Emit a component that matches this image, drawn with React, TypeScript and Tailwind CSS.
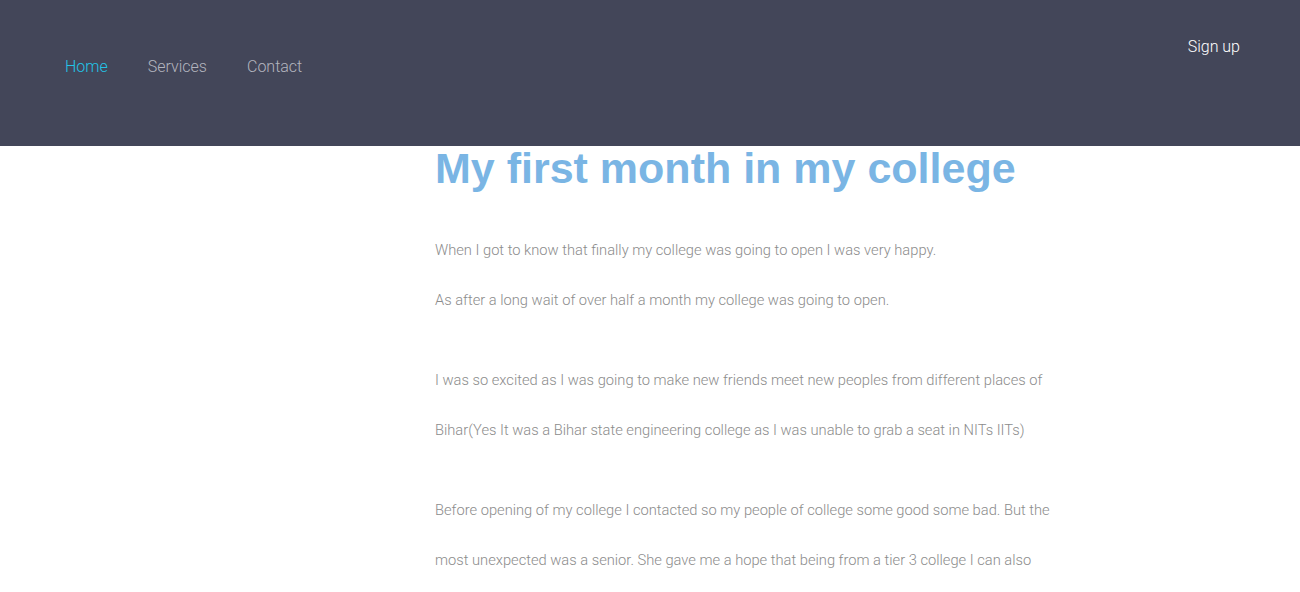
import React from "react";

const links = ["Home", "Services", "Contact"];

const paragraphs = [
  [
    "When I got to know that finally my college was going to open I was very happy.",
    "As after a long wait of over half a month my college was going to open.",
  ],
  [
    "I was so excited as I was going to make new friends meet new peoples from different places of Bihar(Yes It was a Bihar state engineering college as I was unable to grab a seat in NITs IITs)",
  ],
  [
    "Before opening of my college I contacted so my people of college some good some bad. But the most unexpected was a senior. She gave me a hope that being from a tier 3 college I can also make it big if I work hard.",
  ],
];

export default function App() {
  return (
    <div className="h-[592px] overflow-hidden bg-white font-['Roboto',sans-serif] font-light">
      <header className="h-[146px] bg-[#434659] flex justify-between items-start px-[60px]">
        <nav className="flex gap-10 pt-[56px] pl-[5px]">
          {links.map((l, i) => (
            <a
              key={l}
              href="#"
              className={
                i === 0
                  ? "text-[16px] leading-[22px] text-[#22c4e8]"
                  : "text-[16px] leading-[22px] text-[#b3b5bf]"
              }
            >
              {l}
            </a>
          ))}
        </nav>
        <a href="#" className="pt-[36px] text-[16px] leading-[22px] text-white">
          Sign up
        </a>
      </header>
      <main className="ml-[435px] w-[635px]">
        <h1 className="font-['Liberation_Sans',Arial,sans-serif] font-bold text-[43px] leading-[44px] text-[#7ab5e4]">
          My first month in my college
        </h1>
        <div className="mt-[35px] flex flex-col gap-[30px]">
          {paragraphs.map((p, i) => (
            <div key={i}>
              {p.map((line, j) => (
                <p key={j} className="text-[14.7px] leading-[50px] text-[#8c8c8c]">
                  {line}
                </p>
              ))}
            </div>
          ))}
        </div>
      </main>
    </div>
  );
}
